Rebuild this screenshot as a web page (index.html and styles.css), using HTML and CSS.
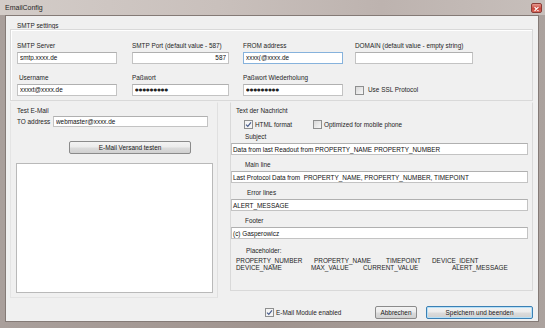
FILE: index.html
```html
<!DOCTYPE html>
<html lang="de">
<head>
    <meta charset="UTF-8">
    <title>EmailConfig</title>
    <link rel="stylesheet" href="styles.css">
</head>
<body>
    <div id="window">
        <div class="titlebar">
            <span class="title">EmailConfig</span>
            <span class="close-btn">
                <svg width="11" height="10" viewBox="0 0 11 10">
                    <path d="M3.5 3 L7.5 7 M7.5 3 L3.5 7" stroke="#fff" stroke-width="1.4" stroke-linecap="round"/>
                </svg>
            </span>
        </div>

        <div id="client">
            <div class="section-title">SMTP settings</div>
            <div class="group smtp">
                <div class="smtp-grid">
                    <div class="field">
                        <label>SMTP Server</label>
                        <input class="txt w100" type="text" value="smtp.xxxx.de">
                    </div>
                    <div class="field">
                        <label>SMTP Port (default value - 587)</label>
                        <input class="txt w97 right" type="text" value="587">
                    </div>
                    <div class="field">
                        <label>FROM address</label>
                        <input class="txt w100 focused" type="text" value="xxxx(@xxxx.de">
                    </div>
                    <div class="field">
                        <label>DOMAIN (default value - empty string)</label>
                        <input class="txt w118" type="text" value="">
                    </div>

                    <div class="field">
                        <label class="indent">Username</label>
                        <input class="txt w100" type="text" value="xxxxt@xxxx.de">
                    </div>
                    <div class="field">
                        <label>Paßwort</label>
                        <input class="txt w97 pw" type="text" value="●●●●●●●●●">
                    </div>
                    <div class="field">
                        <label>Paßwort Wiederholung</label>
                        <input class="txt w100 pw" type="text" value="●●●●●●●●●">
                    </div>
                    <div class="field">
                        <label></label>
                        <div class="check-line">
                            <span class="cb"></span>
                            <span class="cb-label ssl">Use SSL Protocol</span>
                        </div>
                    </div>
                </div>
            </div>

            <div class="lower">
                <div class="group test-mail">
                    <div class="group-title">Test E-Mail</div>
                    <div class="to-row">
                        <span class="to-label">TO address</span>
                        <input class="txt to-input" type="text" value="webmaster@xxxx.de">
                    </div>
                    <button class="btn test-btn">E-Mail Versand testen</button>
                    <textarea class="log"></textarea>
                </div>

                <div class="group message">
                    <div class="group-title">Text der Nachricht</div>
                    <div class="options">
                        <div class="check-line opt-html">
                            <span class="cb checked">
                                <svg width="7" height="7" viewBox="0 0 7 7"><path d="M1 3.6 L2.8 5.4 L6 1.3" fill="none" stroke="#4b5f8e" stroke-width="1.2"/></svg>
                            </span>
                            <span class="cb-label">HTML format</span>
                        </div>
                        <div class="check-line">
                            <span class="cb"></span>
                            <span class="cb-label">Optimized for mobile phone</span>
                        </div>
                    </div>

                    <!-- text boxes as plain boxes so the underscores stay visible -->
                    <div class="msg-field">
                        <label>Subject</label>
                        <div class="txt box">Data from last Readout from PROPERTY_NAME PROPERTY_NUMBER</div>
                    </div>
                    <div class="msg-field">
                        <label>Main line</label>
                        <div class="txt box">Last Protocol Data from  PROPERTY_NAME, PROPERTY_NUMBER, TIMEPOINT</div>
                    </div>
                    <div class="msg-field">
                        <label class="deep">Error lines</label>
                        <div class="txt box">ALERT_MESSAGE</div>
                    </div>
                    <div class="msg-field">
                        <label>Footer</label>
                        <div class="txt box">(c) Gasperowicz</div>
                    </div>

                    <div class="placeholder-title">Placeholder:</div>
                    <div class="ph-row ph-row1">
                        <span>PROPERTY_NUMBER</span>
                        <span>PROPERTY_NAME</span>
                        <span>TIMEPOINT</span>
                        <span>DEVICE_IDENT</span>
                    </div>
                    <div class="ph-row ph-row2">
                        <span>DEVICE_NAME</span>
                        <span>MAX_VALUE</span>
                        <span>CURRENT_VALUE</span>
                        <span>ALERT_MESSAGE</span>
                    </div>
                </div>
            </div>

            <div class="bottom-bar">
                <div class="check-line enabled">
                    <span class="cb checked">
                        <svg width="7" height="7" viewBox="0 0 7 7"><path d="M1 3.6 L2.8 5.4 L6 1.3" fill="none" stroke="#4b5f8e" stroke-width="1.2"/></svg>
                    </span>
                    <span class="cb-label">E-Mail Module enabled</span>
                </div>
                <button class="btn cancel-btn">Abbrechen</button>
                <button class="btn save-btn">Speichern und beenden</button>
            </div>
        </div>
    </div>
</body>
</html>
```

FILE: styles.css
```css
body {
    margin: 0;
    background-color: #ffffff;
    font-family: "Liberation Sans", Arial, sans-serif;
}

#window {
    width: 545px;
    height: 328px;
    display: flex;
    flex-direction: column;
    background: linear-gradient(to right, #a99f9b, #a0948f 50%, #aba29e);
}

.titlebar {
    height: 15px;
    flex-shrink: 0;
    display: flex;
    align-items: center;
    justify-content: space-between;
    padding: 0 3px 0 5px;
    background: linear-gradient(to right, #d3ccc8, #c9c0bc 40%, #bdb3af 70%, #c7bfbb);
}

.title {
    font-size: 7px;
    color: #262626;
}

.close-btn {
    width: 11px;
    height: 10px;
    display: flex;
    border: 1px solid #8c3b36;
    border-radius: 2px;
    box-sizing: border-box;
    background: linear-gradient(#e79a90, #c9473c 55%, #d9695c);
}

#client {
    flex: 1;
    margin: 0 6px 6px 5px;
    border: 1px solid #847a76;
    background-color: #f0f0f0;
    display: flex;
    flex-direction: column;
}

label,
.group-title,
.cb-label,
.to-label,
.placeholder-title,
.section-title,
.ph-row {
    font-size: 6.4px;
    line-height: 8px;
    color: #1e1e1e;
}

.section-title {
    margin: 6px 0 0 11px;
    line-height: 7px;
}

.group {
    border: 1px solid #d9d9d9;
    box-shadow: inset 1px 1px 0 #ffffff;
}

.smtp {
    margin: 0 5px 0 4px;
    padding: 12px 0 4px 6px;
}

.smtp-grid {
    display: grid;
    grid-template-columns: 115px 111px 112px 118px;
    row-gap: 10px;
}

.field {
    display: flex;
    flex-direction: column;
}

.field label {
    height: 8px;
    margin-bottom: 2px;
}

.field label.indent {
    padding-left: 2px;
}

.txt {
    height: 12px;
    box-sizing: border-box;
    margin: 0;
    padding: 1px 2px 2px 2px;
    border: 1px solid #c3c3c3;
    border-top-color: #b0b0b0;
    background-color: #ffffff;
    font-family: "Liberation Sans", Arial, sans-serif;
    font-size: 6.4px;
    line-height: 7px;
    color: #111;
    outline: none;
}

.txt.box {
    padding: 2px 1px 0 1px;
    white-space: pre;
    overflow: hidden;
}

.txt.right {
    text-align: right;
}

.txt.focused {
    border-color: #86b2dc;
}

.txt.pw {
    font-family: "DejaVu Sans", sans-serif;
    font-size: 4px;
    letter-spacing: 0.2px;
    color: #222;
}

.w100 { width: 100px; }
.w97 { width: 97px; }
.w118 { width: 118px; }

.check-line {
    display: flex;
    align-items: center;
    height: 12px;
}

.cb {
    width: 9px;
    height: 9px;
    box-sizing: border-box;
    border: 1px solid #8e8f8f;
    background: linear-gradient(135deg, #d8d8d8, #f7f7f7);
    display: flex;
    align-items: center;
    justify-content: center;
}

.cb.checked {
    background: #f4f4f4;
}

.cb-label {
    margin-left: 2px;
}

.cb-label.ssl {
    margin-left: 4px;
}

.lower {
    display: flex;
    align-items: flex-start;
    margin: 1px 5px 0 4px;
}

.test-mail {
    width: 208px;
    box-sizing: border-box;
    padding: 4px 0 4px 6px;
    border-color: transparent #e0e0e0 #e4e4e4 #e4e4e4;
    box-shadow: none;
}

.group-title {
    height: 8px;
}

.to-row {
    display: flex;
    align-items: center;
    margin-top: 1px;
    height: 11px;
}

.to-label {
    width: 36px;
}

.to-input {
    width: 155px;
    height: 11px;
    padding-bottom: 1px;
}

.btn {
    display: block;
    height: 13px;
    padding: 0;
    border: 1px solid #8b8b8b;
    border-radius: 2px;
    background: linear-gradient(#f3f3f3, #ebebeb 48%, #dcdcdc 52%, #d0d0d0);
    font-family: "Liberation Sans", Arial, sans-serif;
    font-size: 6.4px;
    color: #1a1a1a;
}

.test-btn {
    width: 122px;
    margin: 14px 0 0 52px;
}

.log {
    display: block;
    width: 197px;
    height: 130px;
    box-sizing: border-box;
    margin: 9px 0 0 -1px;
    border: 1px solid #b9b9b9;
    background-color: #ffffff;
    resize: none;
}

.message {
    flex: 1;
    margin-left: 12px;
    padding: 4px 4px 19px 0;
    border-top-color: transparent;
    box-shadow: none;
}

.message .group-title {
    margin-left: 5px;
}

.options {
    display: flex;
    margin: 5px 0 0 13px;
}

.options .check-line {
    height: 9px;
}

.opt-html {
    width: 69px;
}

.msg-field {
    display: flex;
    flex-direction: column;
    margin-top: 6px;
}

.options + .msg-field {
    margin-top: 4px;
}

.msg-field label {
    height: 8px;
    margin: 0 0 2px 14px;
}

.msg-field label.deep {
    margin-left: 16px;
}

.placeholder-title {
    margin: 8px 0 0 15px;
}

.ph-row {
    display: grid;
    line-height: 7px;
    margin-left: 5px;
}

.ph-row1 {
    margin-top: 2px;
    grid-template-columns: 78px 72px 46px auto;
}

.ph-row2 {
    grid-template-columns: 75px 52px 89px auto;
}

.bottom-bar {
    display: flex;
    align-items: center;
    height: 13px;
    margin-top: 8px;
    padding-right: 5px;
}

.enabled {
    margin-left: 259px;
}

.cancel-btn {
    width: 42px;
    margin-left: auto;
}

.save-btn {
    width: 107px;
    margin-left: 9px;
    border-color: #3b80b4;
    box-shadow: inset 0 0 0 1px #b7e0f7;
}
```
